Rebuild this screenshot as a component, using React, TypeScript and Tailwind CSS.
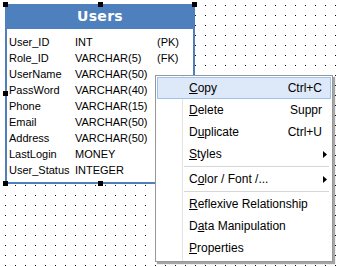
import type { ReactNode } from 'react';

const columns = [
    ['User_ID', 'INT', '(PK)'],
    ['Role_ID', 'VARCHAR(5)', '(FK)'],
    ['UserName', 'VARCHAR(50)', ''],
    ['PassWord', 'VARCHAR(40)', ''],
    ['Phone', 'VARCHAR(15)', ''],
    ['Email', 'VARCHAR(50)', ''],
    ['Address', 'VARCHAR(50)', ''],
    ['LastLogin', 'MONEY', ''],
    ['User_Status', 'INTEGER', ''],
];

type Item = { label: ReactNode; shortcut?: string; submenu?: boolean; active?: boolean } | 'sep';

const items: Item[] = [
    { label: <><u>C</u>opy</>, shortcut: 'Ctrl+C', active: true },
    { label: <><u>D</u>elete</>, shortcut: 'Suppr' },
    { label: <>D<u>u</u>plicate</>, shortcut: 'Ctrl+U' },
    { label: <><u>S</u>tyles</>, submenu: true },
    'sep',
    { label: <>C<u>o</u>lor / Font /...</>, submenu: true },
    'sep',
    { label: <><u>R</u>eflexive Relationship</> },
    { label: <>D<u>a</u>ta Manipulation</> },
    { label: <><u>P</u>roperties</> },
];

function Handle({ className }: { className: string }) {
    return <div className={`absolute w-[5px] h-[5px] bg-black ${className}`} />;
}

function DotGrid() {
    return (
        <svg className="absolute inset-0" width="340" height="267" shapeRendering="crispEdges">
            <defs>
                <pattern id="dots" width="10" height="10" patternUnits="userSpaceOnUse">
                    <rect x="5" y="5" width="1" height="1" fill="#000" />
                </pattern>
            </defs>
            <rect width="340" height="267" fill="url(#dots)" />
        </svg>
    );
}

export default function App() {
    return (
        <div className="relative w-[340px] h-[267px] overflow-hidden bg-white">
            <DotGrid />

            {/* Table entity */}
            <div className="absolute left-[5px] top-[4px] w-[190px] h-[180px] flex flex-col">
                <div className="h-[25px] bg-[#4d80bc] flex items-center justify-center text-white font-bold text-[14px] tracking-[0.3px]" style={{ fontFamily: '"DejaVu Sans", sans-serif' }}>
                    Users
                </div>
                <div className="flex-1 bg-white border-x-2 border-b-2 border-[#4d80bc] pt-[5px] pl-[2px] text-[11px] leading-[16px] text-black" style={{ fontFamily: '"Liberation Sans", Arial, sans-serif' }}>
                    {columns.map(([name, type, key]) => (
                        <div key={name} className="grid grid-cols-[66px_82px_1fr] h-[16px]">
                            <span>{name}</span>
                            <span>{type}</span>
                            <span>{key}</span>
                        </div>
                    ))}
                </div>
                <Handle className="left-[-2px] top-[-2px]" />
                <Handle className="left-[93px] top-[-2px]" />
                <Handle className="left-[187px] top-[-2px]" />
                <Handle className="left-[-2px] top-[87px]" />
                <Handle className="left-[-2px] top-[177px]" />
                <Handle className="left-[93px] top-[177px]" />
            </div>

            {/* Context menu */}
            <div className="absolute left-[155px] top-[75px] w-[178px] h-[187px] bg-white border border-[#979797] shadow-[2px_2px_1px_rgba(0,0,0,0.35)] pt-[1px] px-[1px] text-[12px] text-black" style={{ fontFamily: '"Liberation Sans", Arial, sans-serif' }}>
                <div className="absolute left-[26px] top-0 bottom-0 w-px bg-[#e2e3e3]" />
                {items.map((it, i) =>
                    it === 'sep' ? (
                        <div key={i} className="h-[3px] flex items-center pl-[27px] pr-[2px]">
                            <div className="h-px w-full bg-[#d7d7d7]" />
                        </div>
                    ) : (
                        <div
                            key={i}
                            className={`relative h-[22px] flex items-center border ${it.active ? 'bg-[#dde9f8] border-[#9cc3ec]' : 'border-transparent'}`}
                        >
                            <div className="w-[25px] self-stretch" />
                            <div className="flex-1 pl-[6px] whitespace-nowrap">{it.label}</div>
                            {it.shortcut && <div className="whitespace-nowrap">{it.shortcut}</div>}
                            <div className="w-[8px] flex items-center">
                                {it.submenu && (
                                    <svg width="4" height="7" viewBox="0 0 4 7" className="ml-px">
                                        <polygon points="0,0 4,3.5 0,7" fill="#000" />
                                    </svg>
                                )}
                            </div>
                        </div>
                    )
                )}
            </div>
        </div>
    );
}
